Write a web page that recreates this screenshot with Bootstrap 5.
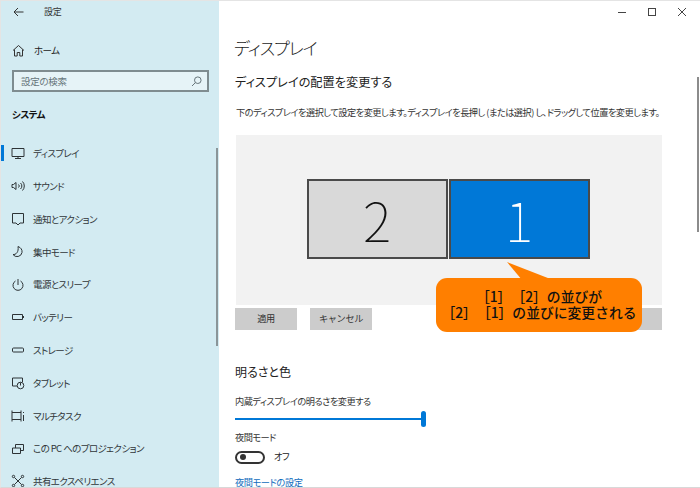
<!DOCTYPE html>
<html lang="ja"><head><meta charset="utf-8"><title>設定</title>
<link href="https://cdn.jsdelivr.net/npm/bootstrap@5.3.0/dist/css/bootstrap.min.css" rel="stylesheet">
<style>
html,body{width:700px;height:488px;overflow:hidden;margin:0;background:#fff}
body{font-family:"Noto Sans CJK JP","Noto Sans",sans-serif;font-feature-settings:"palt";color:#222}
.win{width:700px;height:488px;border-top:1px solid #e4e4e4;border-left:1px solid #e4e4e4;border-bottom:1px solid #d8d8d8;overflow:hidden}
.side{width:218px;flex:none;background:#d3ebf2;height:100%;overflow:hidden}
.thumb-a{width:2px;height:198px;top:147px;right:1px;background:#8a9599}
.thumb-b{width:2px;height:155px;top:76px;right:1px;background:#8c8c8c}
.topline{height:21px;padding:0 0 0 12px;font-size:9px;letter-spacing:-.2px;color:#333}
.topline span{margin-left:20px;margin-top:1px}
.home{margin-top:17px;height:22px;padding-left:11px;font-size:9.5px;letter-spacing:-.6px}
.home span{margin-left:9px}
.srch{margin:9px 0 0 11px;width:197px;height:22px;border:2px solid #7f8c90;background:#e6f3f7;font-size:9.5px;letter-spacing:-.3px;color:#67757a;padding:0 5px 0 7px}
.systm{margin:14px 0 0 11px;font-size:9.5px;font-weight:700;letter-spacing:-.5px;color:#111;height:16px;line-height:16px}
.nav-list{margin-top:21px}
.nav-row{height:32.8px;font-size:9.5px;letter-spacing:-.6px;color:#303639;padding-left:10px;gap:8px;white-space:nowrap}
.nav-row svg{width:14px;height:14px;flex:none;stroke:#2d3336;fill:none;stroke-width:1}
.nav-row.on{margin-top:-6px;position:relative}
.nav-row.on::before{content:"";position:absolute;left:0;top:8px;width:3px;height:16px;background:#0078d7}
.body-pane{flex:1;min-width:0;height:100%;padding-left:16px}
.caps{height:22px;padding-right:3px}
.caps svg{width:30px;height:10px;stroke:#444;fill:none;stroke-width:1}
.h-main{margin:11px 0 0 -1px;font-size:17px;font-weight:300;letter-spacing:-1px;line-height:27px;color:#1c1c1c}
.h-sec{margin:12px 0 0;font-size:12.2px;font-weight:400;line-height:18px;color:#222}
.para{margin:14px 0 0;padding-left:1px;font-size:9.2px;letter-spacing:-.5px;line-height:14px;color:#333;white-space:nowrap}
.stage{margin:16px 0 0 1px;width:426px;height:170px;background:#f2f2f2;padding:44px 2px 0 0;gap:1px}
.mon{width:141px;height:80px;border:2px solid #4a4a4a;font-size:54px;font-weight:100;line-height:1}
.mon-2{background:#d9d9d9;color:#111}
.mon-1{background:#0078d7;color:#fff}
.btns{width:427px;margin-top:3px}
.gbtn{width:62px;height:22px;background:#ccc;font-size:9.2px;letter-spacing:-.4px;color:#333;border:0;padding:0;border-radius:0}
.gap-cancel{margin-left:13px}
.h-sub{margin:32px 0 0;font-size:12px;font-weight:400;line-height:20px}
.lbl{font-size:9.2px;letter-spacing:-.5px;line-height:14px;color:#333}
.lbl-a{margin-top:12px}
.slide{width:191px;height:16px;margin-top:3px}
.slide i{display:block;height:2px;flex:1;background:#0078d7}
.slide b{display:block;width:5px;height:16px;border-radius:3px;background:#0078d7}
.lbl-b{margin-top:3px}
.sw-row{margin-top:5px;height:16px;font-size:9.2px;letter-spacing:-.4px;gap:9px}
.sw{width:30px;height:13px;border:2px solid #333;border-radius:7px;padding-left:3px}
.sw i{display:block;width:6px;height:6px;border-radius:50%;background:#333}
.lnk{margin-top:10px;font-size:9.2px;letter-spacing:-.4px;line-height:14px;color:#0f6cbd;text-decoration:none;display:block}
.tip{left:435px;top:277px;width:206px;height:54px;background:#ff7f00;border-radius:11px;color:#111;font-size:13.8px;font-weight:500;font-feature-settings:normal;text-spacing-trim:space-all;line-height:16px;text-align:center;padding-top:10px;white-space:nowrap}
.tail{left:505px;top:261px;width:50px;height:18px}
</style></head>
<body>
<div class="win d-flex position-relative">
 <div class="side position-relative">
  <div class="topline d-flex align-items-center">
   <svg width="11" height="10" viewBox="0 0 11 10" fill="none" stroke="#333"><path d="M10.500 5H1M5 1 1 5l4 4"/></svg>
   <span>設定</span>
  </div>
  <div class="home d-flex align-items-center">
   <svg width="13" height="13" viewBox="0 0 13 13" fill="none" stroke="#333"><path d="M1 6.500 6.500 1.500 12 6.500M2.500 5.500V12H5.200V8.500H7.800V12H10.500V5.500"/></svg>
   <span>ホーム</span>
  </div>
  <div class="srch d-flex align-items-center justify-content-between">
   <span>設定の検索</span>
   <svg width="11" height="11" viewBox="0 0 11 11" fill="none" stroke="#67757a"><circle cx="6.800" cy="4.200" r="3.300"/><path d="M4.400 6.600 1 10"/></svg>
  </div>
  <div class="systm">システム</div>
  <div class="nav-list">
   <div class="nav-row on d-flex align-items-center"><svg viewBox="0 0 14 14"><path d="M1 2.500h12v8H1zM7 10.500v2M4 12.500h6"/></svg><span>ディスプレイ</span></div>
   <div class="nav-row d-flex align-items-center"><svg viewBox="0 0 14 14"><path d="M1 5.500h1.500L5 3.500v7L2.500 8.500H1zM7.500 5.500a2 2 0 0 1 0 3M9.500 4a4 4 0 0 1 0 6M11.500 2.500a6.500 6.500 0 0 1 0 9"/></svg><span>サウンド</span></div>
   <div class="nav-row d-flex align-items-center"><svg viewBox="0 0 14 14"><path d="M1.500 1.500h11v9.500H9L7 13 5 11H1.500z"/></svg><span>通知とアクション</span></div>
   <div class="nav-row d-flex align-items-center"><svg viewBox="0 0 14 14"><path d="M7 1.500c2.800 1 4.500 3.300 4 6a5 5 0 0 1-9 2c2.800.5 6-2.500 5-8z"/></svg><span>集中モード</span></div>
   <div class="nav-row d-flex align-items-center"><svg viewBox="0 0 14 14"><path d="M7 1v6M4.500 3a5 5 0 1 0 5 0"/></svg><span>電源とスリープ</span></div>
   <div class="nav-row d-flex align-items-center"><svg viewBox="0 0 14 14"><path d="M1.500 4.500h10v5h-10zM12.500 6v2"/></svg><span>バッテリー</span></div>
   <div class="nav-row d-flex align-items-center"><svg viewBox="0 0 14 14"><rect x="1.500" y="5" width="11" height="4" rx="1"/></svg><span>ストレージ</span></div>
   <div class="nav-row d-flex align-items-center"><svg viewBox="0 0 14 14"><path d="M6 10H1.500V2h10v4"/><circle cx="9.500" cy="9.500" r="3.300"/><path d="M9.500 6.500v3"/></svg><span>タブレット</span></div>
   <div class="nav-row d-flex align-items-center"><svg viewBox="0 0 14 14"><path d="M1 1.500v11M10 1.500v11M1 3.500h9M1 10.500h9M12.500 3v1M12.500 6v6"/></svg><span>マルチタスク</span></div>
   <div class="nav-row d-flex align-items-center"><svg viewBox="0 0 14 14"><path d="M4.500 6V2.500h8v6H9.500M1.500 6h8v5.500h-8z"/></svg><span>この PC へのプロジェクション</span></div>
   <div class="nav-row d-flex align-items-center"><svg viewBox="0 0 14 14"><circle cx="2.500" cy="2.500" r="1.200"/><circle cx="11.500" cy="2.500" r="1.200"/><circle cx="2.500" cy="11.500" r="1.200"/><circle cx="11.500" cy="11.500" r="1.200"/><path d="m3.500 3.500 7 7M10.500 3.500l-7 7"/></svg><span>共有エクスペリエンス</span></div>
  </div>
  <div class="thumb-a position-absolute"></div>
 </div>
 <div class="body-pane position-relative">
  <div class="caps d-flex justify-content-end align-items-center">
   <svg viewBox="0 0 30 10"><path d="M11 5.500h8"/></svg>
   <svg viewBox="0 0 30 10"><rect x="11.500" y="1.500" width="7" height="7"/></svg>
   <svg viewBox="0 0 30 10"><path d="m11 1 8 8M19 1l-8 8"/></svg>
  </div>
  <h1 class="h-main">ディスプレイ</h1>
  <h2 class="h-sec">ディスプレイの配置を変更する</h2>
  <p class="para">下のディスプレイを選択して設定を変更します。ディスプレイを長押し (または選択) し、ドラッグして位置を変更します。</p>
  <div class="stage d-flex justify-content-center align-items-start">
   <div class="mon mon-2 d-flex align-items-center justify-content-center">2</div>
   <div class="mon mon-1 d-flex align-items-center justify-content-center">1</div>
  </div>
  <div class="btns d-flex">
   <button class="btn gbtn" type="button">適用</button>
   <button class="btn gbtn gap-cancel" type="button">キャンセル</button>
   <button class="btn gbtn ms-auto" type="button" aria-label="識別"></button>
  </div>
  <h2 class="h-sub">明るさと色</h2>
  <div class="lbl lbl-a">内蔵ディスプレイの明るさを変更する</div>
  <div class="slide d-flex align-items-center"><i></i><b></b></div>
  <div class="lbl lbl-b">夜間モード</div>
  <div class="sw-row d-flex align-items-center"><div class="sw d-flex align-items-center"><i></i></div><span>オフ</span></div>
  <a class="lnk" href="#">夜間モードの設定</a>
  <div class="thumb-b position-absolute"></div>
 </div>
 <svg class="tail position-absolute" viewBox="0 0 50 18"><path d="M1 0 16 18H47z" fill="#ff7f00"/></svg>
 <div class="tip position-absolute">［1］［2］の並びが<br>［2］［1］の並びに変更される</div>
</div>
</body></html>
